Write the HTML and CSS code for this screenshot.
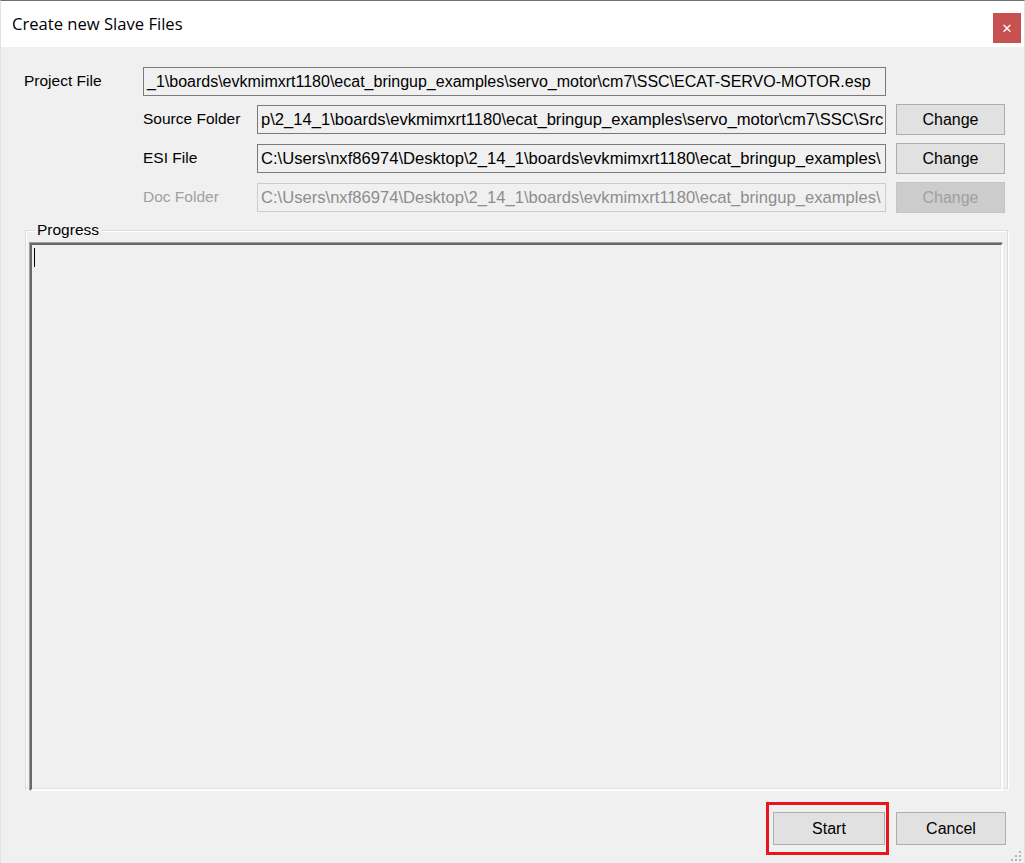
FILE: index.html
```html
<!DOCTYPE html>
<html>
<head>
<meta charset="utf-8">
<link rel="stylesheet" href="styles.css">
</head>
<body>
<div class="window">
  <div class="titlebar">
    <div class="title">Create new Slave Files</div>
    <div class="close">&#x2715;</div>
  </div>
  <div class="content">
    <div class="fields">
      <div class="row">
        <div class="label main">Project File</div>
        <div class="box wide">_1\boards\evkmimxrt1180\ecat_bringup_examples\servo_motor\cm7\SSC\ECAT-SERVO-MOTOR.esp</div>
      </div>
      <div class="row sub">
        <div class="label">Source Folder</div>
        <div class="box">p\2_14_1\boards\evkmimxrt1180\ecat_bringup_examples\servo_motor\cm7\SSC\Src</div>
        <div class="btn">Change</div>
      </div>
      <div class="row sub">
        <div class="label">ESI File</div>
        <div class="box">C:\Users\nxf86974\Desktop\2_14_1\boards\evkmimxrt1180\ecat_bringup_examples\</div>
        <div class="btn">Change</div>
      </div>
      <div class="row sub disabled">
        <div class="label">Doc Folder</div>
        <div class="box">C:\Users\nxf86974\Desktop\2_14_1\boards\evkmimxrt1180\ecat_bringup_examples\</div>
        <div class="btn">Change</div>
      </div>
    </div>
    <fieldset class="group">
      <legend>Progress</legend>
      <div class="log"><span class="caret"></span></div>
    </fieldset>
    <div class="actions">
      <div class="highlight"><div class="btn big">Start</div></div>
      <div class="btn big">Cancel</div>
    </div>
  </div>
  <svg class="grip" width="12" height="12" viewBox="0 0 12 12">
    <g fill="#b8b8b8">
      <rect x="9" y="1" width="2" height="2"/>
      <rect x="5" y="5" width="2" height="2"/><rect x="9" y="5" width="2" height="2"/>
      <rect x="1" y="9" width="2" height="2"/><rect x="5" y="9" width="2" height="2"/><rect x="9" y="9" width="2" height="2"/>
    </g>
  </svg>
</div>
</body>
</html>
```

FILE: styles.css
```css
* { box-sizing: border-box; }
html, body { margin: 0; padding: 0; }
body {
  width: 1025px;
  height: 863px;
  overflow: hidden;
  background: #f0f0f0;
  font-family: "Liberation Sans", Arial, sans-serif;
  color: #000;
}
.window {
  position: relative;
  width: 1025px;
  height: 863px;
  border-top: 1px solid #6f6f6f;
  border-left: 1px solid #e2e2e2;
  border-right: 1px solid #e2e2e2;
  background: #f0f0f0;
}
.titlebar {
  height: 46px;
  background: #fff;
  display: flex;
  align-items: flex-start;
  justify-content: space-between;
}
.title {
  font-family: "Open Sans", "Noto Sans", sans-serif;
  font-size: 16.6px;
  padding-left: 11px;
  padding-top: 11px;
  line-height: 24px;
}
.close {
  width: 28px;
  height: 30px;
  margin-top: 12px;
  margin-right: 3px;
  background: #c75050;
  color: #fff;
  font-family: "DejaVu Sans", sans-serif;
  font-weight: bold;
  font-size: 13px;
  display: flex;
  align-items: center;
  justify-content: center;
}
.content {
  padding: 19px 0 0 23px;
}
.fields {
  display: flex;
  flex-direction: column;
  gap: 8px;
}
.row {
  display: flex;
  align-items: center;
  height: 31px;
}
.row + .row { margin-top: -1px; }
.row + .row + .row { margin-top: 0; }
.label {
  font-size: 15.5px;
  white-space: nowrap;
  padding-bottom: 1px;
}
.label.main { width: 119px; }
.row.sub { padding-left: 119px; }
.row.sub .label { width: 114px; }
.box {
  height: 29px;
  border: 1px solid #7a7a7a;
  background: #f0f0f0;
  font-size: 16.6px;
  line-height: 27px;
  padding-left: 3px;
  white-space: nowrap;
  overflow: hidden;
  width: 629px;
}
.box.wide { width: 743px; font-size: 16px; }
.btn {
  height: 31px;
  width: 109px;
  margin-left: 10px;
  border: 1px solid #adadad;
  background: #e1e1e1;
  font-size: 16px;
  display: flex;
  align-items: center;
  justify-content: center;
}
.disabled .label { color: #a0a0a0; }
.disabled .box { border-color: #cccccc; color: #8d8d8d; }
.disabled .btn { background: #cccccc; border-color: #c4c4c4; color: #a0a0a0; }

.group {
  margin: 8px 0 0 1px;
  width: 983px;
  height: 568px;
  padding: 0 4px 3px 4px;
  border: 1px solid #dcdcdc;
  box-shadow: inset 1px 1px 0 #fff, 1px 1px 0 #fff;
}
.group legend {
  font-size: 15.5px;
  padding: 0 2px;
  margin-left: 5px;
  line-height: 18px;
}
.log {
  height: 548px;
  margin-top: 4px;
  border-top: 2px solid #696969;
  border-left: 2px solid #696969;
  border-right: 2px solid #fff;
  border-bottom: 2px solid #fff;
  box-shadow: inset -1px -1px 0 #e3e3e3, -1px -1px 0 #a0a0a0;
  padding: 3px 0 0 2px;
}
.caret {
  display: block;
  width: 1px;
  height: 19px;
  background: #000;
}
.actions {
  display: flex;
  justify-content: flex-end;
  align-items: center;
  margin-top: 13px;
  padding-right: 18px;
}
.highlight {
  border: 3px solid #e8141e;
  padding: 7px 1px 7px 4px;
}
.highlight .btn { margin-left: 0; }
.btn.big {
  height: 33px;
  width: 112px;
}
.actions > .btn.big { width: 110px; margin-left: 7px; }
.grip {
  position: absolute;
  right: 2px;
  bottom: 1px;
}
```
